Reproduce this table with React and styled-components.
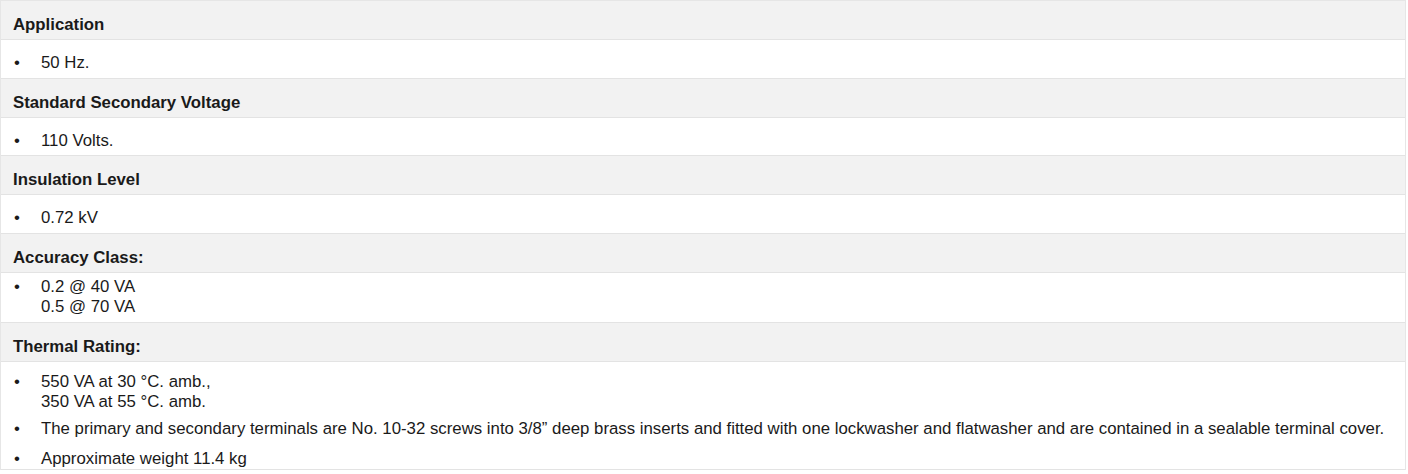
import React from "react";
import styled, { createGlobalStyle } from "styled-components";

const GlobalStyle = createGlobalStyle`
  html, body {
    margin: 0;
    padding: 0;
    background: #ffffff;
  }
  body {
    font-family: "Liberation Sans", Arial, sans-serif;
    color: #1a1a1a;
  }
`;

// Outer table frame
const SpecTable = styled.div`
  width: 1406px;
  box-sizing: border-box;
  border: 1px solid #e6e6e6;
  border-bottom: none;
  display: flex;
  flex-direction: column;
`;

// Grey header row with bold title
const SectionHeader = styled.div`
  background-color: #f2f2f2;
  border-bottom: 1px solid #e3e3e3;
  padding: 14px 12px 4px;
  font-weight: 700;
  font-size: 16.8px;
  line-height: 20px;
  height: 39px;
  box-sizing: border-box;
`;

// White body row holding the bullet items
const SectionBody = styled.ul`
  list-style: none;
  margin: 0;
  padding: 4px 12px ${(p) => p.$bottom ?? 5}px;
  border-bottom: 1px solid #e3e3e3;
  background: #ffffff;
  display: flex;
  flex-direction: column;
`;

const Item = styled.li`
  display: grid;
  grid-template-columns: 28px 1fr;
  margin-top: ${(p) => p.$top ?? 0}px;
  font-size: 16.8px;
  line-height: 20px;
`;

const Bullet = styled.span`
  padding-left: 1px;
`;

const Line = styled.span`
  display: block;
`;

const sections = [
  { title: "Application", items: [{ top: 9, lines: ["50 Hz."] }] },
  {
    title: "Standard Secondary Voltage",
    items: [{ top: 9, lines: ["110 Volts."] }],
    bottom: 4,
  },
  { title: "Insulation Level", items: [{ top: 9, lines: ["0.72 kV"] }] },
  {
    title: "Accuracy Class:",
    items: [{ top: 0, lines: ["0.2 @ 40 VA", "0.5 @ 70 VA"] }],
    bottom: 5,
  },
  {
    title: "Thermal Rating:",
    items: [
      { top: 6, lines: ["550 VA at 30 °C. amb.,", "350 VA at 55 °C. amb."] },
      {
        top: 7,
        lines: [
          "The primary and secondary terminals are No. 10-32 screws into 3/8” deep brass inserts and fitted with one lockwasher and flatwasher and are contained in a sealable terminal cover.",
        ],
      },
      { top: 10, lines: ["Approximate weight 11.4 kg"] },
    ],
    bottom: 0,
  },
];

export default function App() {
  return (
    <>
      <GlobalStyle />
      <SpecTable>
        {sections.map((s) => (
          <React.Fragment key={s.title}>
            <SectionHeader>{s.title}</SectionHeader>
            <SectionBody $bottom={s.bottom}>
              {s.items.map((it, i) => (
                <Item key={i} $top={it.top}>
                  <Bullet>•</Bullet>
                  <div>
                    {it.lines.map((l) => (
                      <Line key={l}>{l}</Line>
                    ))}
                  </div>
                </Item>
              ))}
            </SectionBody>
          </React.Fragment>
        ))}
      </SpecTable>
    </>
  );
}
